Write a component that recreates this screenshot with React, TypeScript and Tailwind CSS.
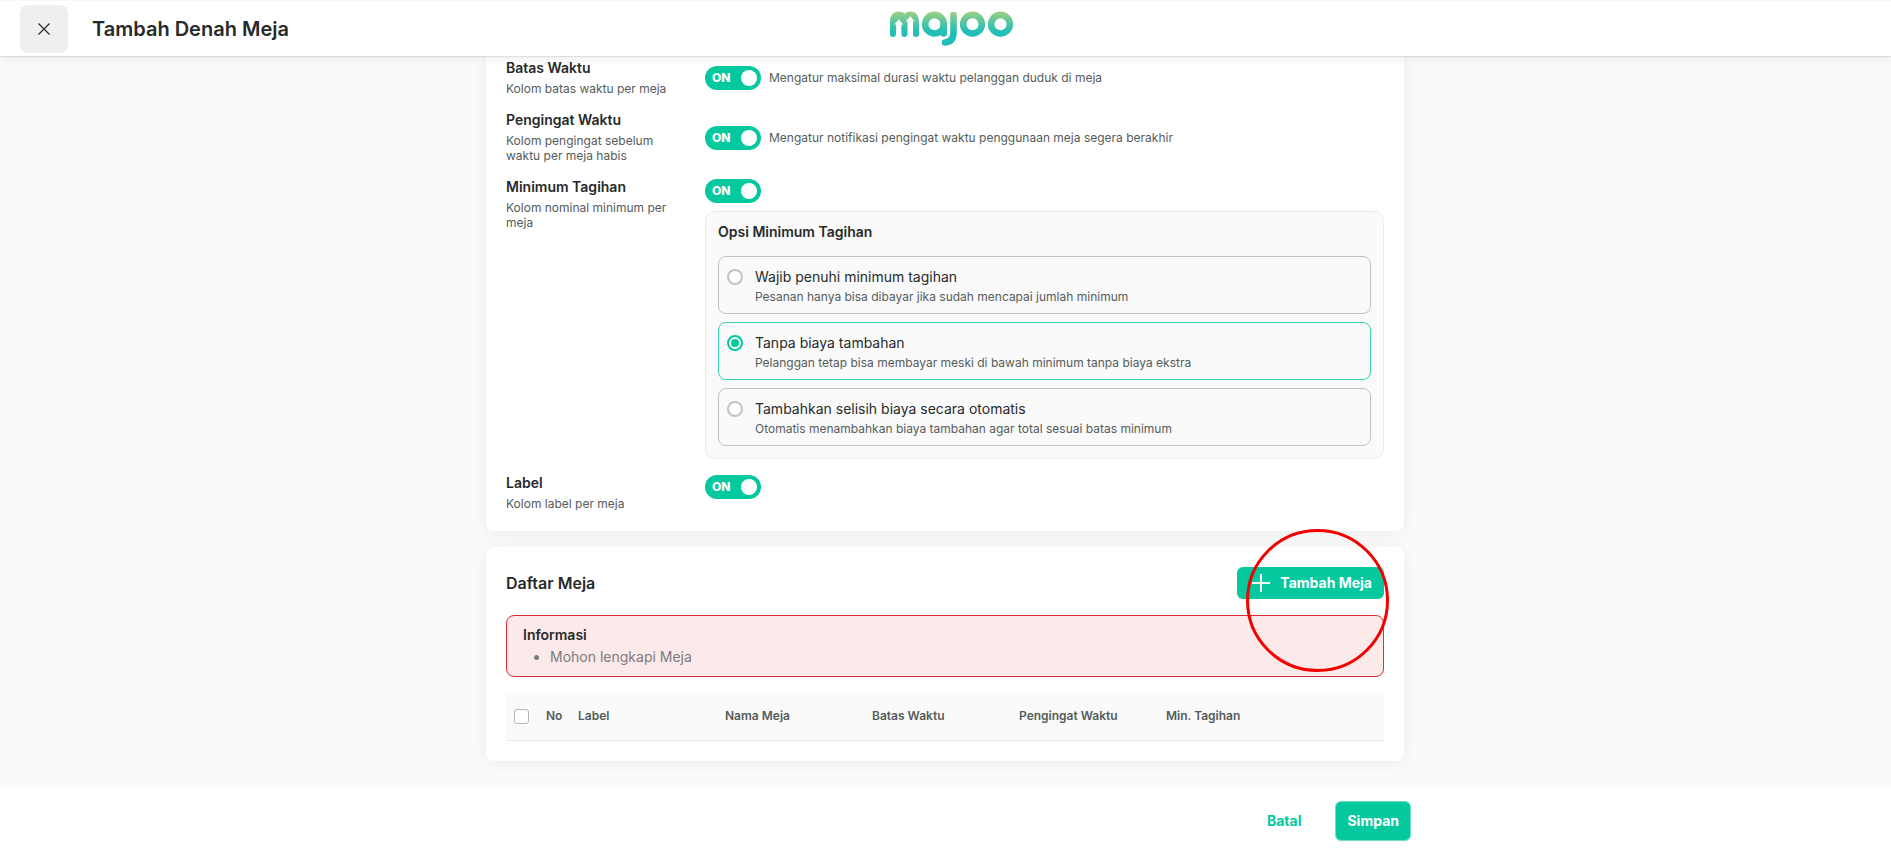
import React, { useState } from "react";

function Logo() {
  return (
    <svg className="h-9 w-[126px]" viewBox="0 0 126 36" fill="none" role="img" aria-label="majoo">
      <defs>
        <linearGradient id="brand" gradientUnits="userSpaceOnUse" x1="0" y1="0" x2="0" y2="26">
          <stop offset="0" stopColor="#a3cf82" />
          <stop offset="0.45" stopColor="#54c69f" />
          <stop offset="0.8" stopColor="#21bfb8" />
          <stop offset="1" stopColor="#21bfb8" />
        </linearGradient>
      </defs>
      <path
        d="M2 23V10.500C2 4.500 5.500 0.500 10.500 0.500C13 0.500 15 1.300 16.500 2.800C18 1.300 20 0.500 22.500 0.500C27.500 0.500 31 4.500 31 10.500V23A3 3 0 0 1 25 23V10.500H19.500V23A3 3 0 0 1 13.500 23V13H8V23A3 3 0 0 1 2 23Z"
        fill="url(#brand)"
      />
      <path d="M6.300 13.500L10.800 8.300L15.300 13.500ZM17.600 10.600L22.200 5.200L26.800 10.600Z" fill="#fff" />
      <path d="M8 16.500V19M13.500 16.500V19" stroke="url(#brand)" strokeWidth="0.600" />
      <circle cx="46.500" cy="13.200" r="9.300" stroke="url(#brand)" strokeWidth="6.600" />
      <path
        d="M55.600 13V22.500M65.500 4V21.500C65.500 27.500 63 31 57 31.500"
        stroke="url(#brand)"
        strokeWidth="6.600"
        strokeLinecap="round"
      />
      <circle cx="84.500" cy="13.200" r="9.300" stroke="url(#brand)" strokeWidth="6.600" />
      <circle cx="112.500" cy="13.200" r="9.300" stroke="url(#brand)" strokeWidth="6.600" />
    </svg>
  );
}

function Toggle({ label }: { label: string }) {
  const [on, setOn] = useState(true);
  return (
    <button
      type="button"
      role="switch"
      aria-checked={on}
      aria-label={label}
      onClick={() => setOn(!on)}
      className={`flex h-6 w-14 shrink-0 items-center justify-between rounded-full pr-1 pl-[7px] ${
        on ? "bg-[#04c99e]" : "flex-row-reverse bg-gray-400"
      }`}
    >
      <span className="text-xs font-extrabold text-white">{on ? "ON" : "OFF"}</span>
      <span className="size-4 rounded-full bg-white" />
    </button>
  );
}

function Setting({
  title,
  description,
  centered = false,
  children,
}: {
  title: string;
  description: string;
  centered?: boolean;
  children: React.ReactNode;
}) {
  return (
    <div className={`flex gap-8 ${centered ? "items-center" : "items-start"}`}>
      <div className="w-[167px] shrink-0">
        <h3 className="text-sm leading-4 font-semibold">{title}</h3>
        <p className="mt-[5px] text-xs leading-[15px] text-[#555c5b]">{description}</p>
      </div>
      <div className="min-w-0 flex-1">{children}</div>
    </div>
  );
}

const options = [
  {
    title: "Wajib penuhi minimum tagihan",
    description: "Pesanan hanya bisa dibayar jika sudah mencapai jumlah minimum",
  },
  {
    title: "Tanpa biaya tambahan",
    description: "Pelanggan tetap bisa membayar meski di bawah minimum tanpa biaya ekstra",
  },
  {
    title: "Tambahkan selisih biaya secara otomatis",
    description: "Otomatis menambahkan biaya tambahan agar total sesuai batas minimum",
  },
];

function MinimumOptions() {
  const [selected, setSelected] = useState(1);
  return (
    <div
      role="radiogroup"
      aria-labelledby="opsi-title"
      className="mt-2 rounded-[10px] border border-[#ebedec] bg-[#fafafa] p-3"
    >
      <h4 id="opsi-title" className="mb-4 text-sm leading-4 font-semibold">
        Opsi Minimum Tagihan
      </h4>
      <div className="flex flex-col gap-2">
        {options.map((option, i) => (
          <label
            key={option.title}
            className={`flex gap-3 rounded-lg border px-2 pt-3 pb-[9px] ${
              i === selected ? "border-[#36d4b1]" : "border-[#c0c2c2]"
            }`}
          >
            <input
              type="radio"
              name="opsi"
              checked={i === selected}
              onChange={() => setSelected(i)}
              className="size-4 shrink-0 appearance-none rounded-full border-2 border-[#c0c4c3] bg-white checked:border-[#04c99e] checked:bg-[#04c99e] checked:bg-clip-content checked:p-[2px]"
            />
            <span>
              <span className="block text-sm leading-4">{option.title}</span>
              <span className="mt-1 block text-xs leading-[15px] text-[#555c5b]">
                {option.description}
              </span>
            </span>
          </label>
        ))}
      </div>
    </div>
  );
}

const columns = ["Label", "Nama Meja", "Batas Waktu", "Pengingat Waktu", "Min. Tagihan"];

export default function App() {
  return (
    <div className="flex h-screen flex-col bg-[#fafafa] font-['Inter',sans-serif] text-[#272a2a]">
      <header className="z-10 grid h-14 shrink-0 grid-cols-[1fr_auto_1fr] items-center border-t border-[#f6f6f6] bg-white pr-[10px] pl-5 shadow-[0_1px_1px_rgba(0,0,0,0.08),0_2px_10px_rgba(0,0,0,0.08)]">
        <div className="flex items-center gap-6">
          <button
            type="button"
            aria-label="Tutup"
            className="flex size-12 items-center justify-center rounded-lg bg-[#eef0f0]"
          >
            <svg className="size-3" viewBox="0 0 12 12" stroke="#272a2a" strokeWidth="1.200">
              <path d="M0.500 0.500L11.500 11.500M11.500 0.500L0.500 11.500" />
            </svg>
          </button>
          <h1 className="text-xl font-semibold">Tambah Denah Meja</h1>
        </div>
        <Logo />
      </header>

      <main className="min-h-0 flex-1 overflow-hidden pr-px">
        <div className="mx-auto flex max-w-[918px] flex-col gap-4">
          <section className="flex flex-col gap-4 rounded-b-lg bg-white px-5 pt-1 pb-5 shadow-[0_2px_16px_rgba(0,0,0,0.06)]">
            <Setting title="Batas Waktu" description="Kolom batas waktu per meja" centered>
              <div className="flex items-center gap-2">
                <Toggle label="Batas Waktu" />
                <p className="text-xs text-[#555c5b]">
                  Mengatur maksimal durasi waktu pelanggan duduk di meja
                </p>
              </div>
            </Setting>
            <Setting
              title="Pengingat Waktu"
              description="Kolom pengingat sebelum waktu per meja habis"
              centered
            >
              <div className="flex items-center gap-2">
                <Toggle label="Pengingat Waktu" />
                <p className="text-xs text-[#555c5b]">
                  Mengatur notifikasi pengingat waktu penggunaan meja segera berakhir
                </p>
              </div>
            </Setting>
            <Setting title="Minimum Tagihan" description="Kolom nominal minimum per meja">
              <Toggle label="Minimum Tagihan" />
              <MinimumOptions />
            </Setting>
            <Setting title="Label" description="Kolom label per meja">
              <Toggle label="Label" />
            </Setting>
          </section>

          <section className="rounded-lg bg-white p-5 shadow-[0_2px_16px_rgba(0,0,0,0.06)]">
            <div className="flex items-center justify-between">
              <h2 className="text-base font-semibold">Daftar Meja</h2>
              <div className="relative">
                <button
                  type="button"
                  className="flex h-8 items-center gap-[7px] rounded-md bg-[#04c99e] px-3 text-sm font-bold text-white"
                >
                  <svg className="size-6" viewBox="0 0 24 24" stroke="currentColor" strokeWidth="2">
                    <path d="M12 3V21M3 12H21" />
                  </svg>
                  Tambah Meja
                </button>
                <span className="pointer-events-none absolute -top-[38px] -right-[5px] size-[143px] rounded-full border-3 border-[#f50000]" />
              </div>
            </div>

            <div
              role="alert"
              className="mt-4 rounded-lg border border-[#e02b38] bg-[#fce9e9] px-4 py-2 text-sm leading-[22px]"
            >
              <p className="font-semibold">Informasi</p>
              <ul className="list-disc pl-[27px] text-[#7b7b7b]">
                <li>Mohon lengkapi Meja</li>
              </ul>
            </div>

            <table className="mt-4 w-full table-fixed border-b border-[#ebedec] bg-[#fafafa] text-left text-xs text-[#555c5b]">
              <thead>
                <tr className="h-[47px]">
                  <th className="w-8 px-2">
                    <input
                      type="checkbox"
                      aria-label="Pilih semua meja"
                      className="block size-[15px] appearance-none rounded-[3px] border border-[#b4b8b7] bg-white checked:bg-[#04c99e]"
                    />
                  </th>
                  <th className="w-8 px-2 font-semibold">No</th>
                  {columns.map((column) => (
                    <th key={column} className="w-[147px] px-2 font-semibold">
                      {column}
                    </th>
                  ))}
                  <td />
                </tr>
              </thead>
            </table>
          </section>
        </div>
      </main>

      <footer className="z-10 shrink-0 bg-white pt-4 pr-px pb-[7px]">
        <div className="mx-auto flex max-w-[932px] justify-end gap-[22px]">
          <button type="button" className="h-10 px-3 text-sm font-bold text-[#04c99e]">
            Batal
          </button>
          <button
            type="button"
            className="h-10 rounded-md border border-[#6fdfc6] bg-[#04c99e] px-[11px] text-sm font-bold text-white"
          >
            Simpan
          </button>
        </div>
      </footer>
    </div>
  );
}
